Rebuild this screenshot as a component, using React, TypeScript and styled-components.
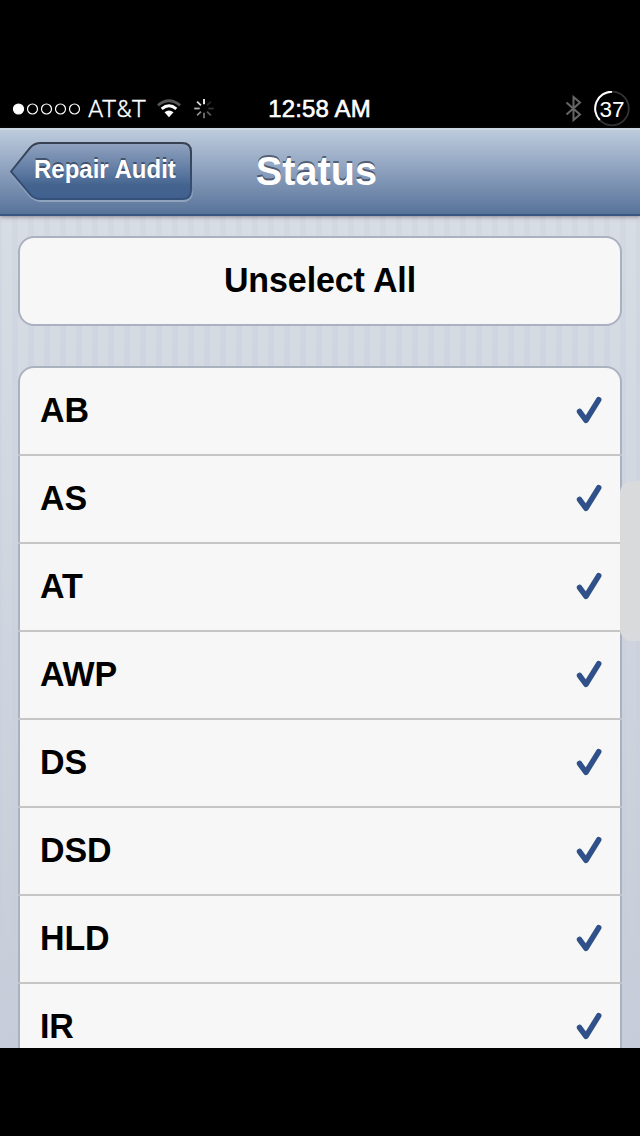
import React from "react";
import styled, { createGlobalStyle } from "styled-components";

const GlobalStyle = createGlobalStyle`
  * { box-sizing: border-box; }
  body { margin: 0; background: #000; font-family: "Liberation Sans", Arial, sans-serif; }
`;

const Phone = styled.div`
  width: 640px;
  height: 1136px;
  padding: 88px 0;
  background: #000;
  overflow: hidden;
`;

const Screen = styled.div`
  position: relative;
  height: 960px;
  display: flex;
  flex-direction: column;
  overflow: hidden;
`;

const StatusBar = styled.div`
  flex: none;
  height: 40px;
  padding: 0 10px 1px 12px;
  display: grid;
  grid-template-columns: 1fr auto 1fr;
  align-items: center;
  color: #fff;
`;

const StatusGroup = styled.div<{ $end?: boolean }>`
  display: flex;
  align-items: center;
  justify-content: ${(p) => (p.$end ? "flex-end" : "flex-start")};
`;

const Carrier = styled.span`
  margin: 0 11px 1px 7px;
  width: 57px;
  font: 300 24.5px/38px Roboto, sans-serif;
  -webkit-text-stroke: 0.3px #fff;
  white-space: nowrap;
`;

const Clock = styled.span`
  margin-right: 3px;
  font-size: 24px;
  line-height: 42px;
  letter-spacing: 0.15px;
  -webkit-text-stroke: 0.6px #fff;
  transform: scaleY(1.02);
`;

const Spinner = styled.svg`
  margin-left: 12px;
`;

const Battery = styled.svg`
  margin-left: 12px;
`;

const NavBar = styled.header`
  flex: none;
  position: relative;
  z-index: 1;
  height: 88px;
  padding: 14px 10px 0;
  display: grid;
  grid-template-columns: 184px 1fr 191px;
  align-items: start;
  border-top: 2px solid #cdd7e4;
  border-bottom: 2px solid #375780;
  background: linear-gradient(#bdcbdc, #8b9fbd 50%, #587399);
  box-shadow: 0 1px 4px rgba(60, 50, 60, 0.5);
`;

const BackButton = styled.button`
  position: relative;
  width: 184px;
  height: 60px;
  margin-top: -2px;
  padding: 0 0 4px 24px;
  border: 0;
  background: none;
  color: #fff;
  font: bold 24px/56px "Liberation Sans", Arial, sans-serif;
  text-align: left;
  white-space: nowrap;
  text-shadow: 0 -2px 0 rgba(40, 50, 70, 0.65);
`;

const BackShape = styled.svg`
  position: absolute;
  inset: 0;
`;

const BackLabel = styled.span`
  position: relative;
  display: block;
  transform: scaleY(1.045);
`;

const Title = styled.h1`
  margin: -2px 0 0;
  color: #fff;
  font-size: 39.7px;
  line-height: 56px;
  text-align: center;
  text-shadow: 0 -2px 0 rgba(40, 50, 70, 0.65);
  transform: scaleY(1.045);
`;

const Content = styled.main`
  flex: 1;
  min-height: 0;
  padding: 20px 18px 0;
  background:
    linear-gradient(90deg, rgba(190, 203, 222, 0.22) 6px, transparent 6px) 12px 0 / 16px 100%,
    linear-gradient(#d8dce4, #c8ccd8);
  overflow: hidden;
`;

const Group = styled.div`
  margin-bottom: 40px;
  border: 2px solid #aab1bf;
  border-radius: 16px;
  background: #f7f7f7;
`;

const SelectButton = styled.button`
  display: block;
  width: 100%;
  height: 86px;
  padding: 0;
  border: 0;
  background: none;
  color: #000;
  font: bold 34px/82px "Liberation Sans", Arial, sans-serif;
`;

const Row = styled.div`
  height: 88px;
  margin: 0 -2px;
  padding: 0 20px 0 22px;
  display: flex;
  align-items: center;
  justify-content: space-between;
  border-bottom: 2px solid #c5c5c5;
`;

const Label = styled.span`
  display: block;
  font-size: 34px;
  font-weight: bold;
  line-height: 82px;
  padding-bottom: 2px;
  letter-spacing: -0.1px;
  transform: scaleY(1.03);
`;

const SideHandle = styled.div`
  position: absolute;
  right: 0;
  top: 393px;
  width: 20px;
  height: 160px;
  border-radius: 12px 0 0 12px;
  background: #d9dadc;
`;

const statuses = ["AB", "AS", "AT", "AWP", "DS", "DSD", "HLD", "IR"];
const spokes = [1, 0.15, 0.2, 0.35, 0.45, 0.55, 0.7, 0.85];

const Check = () => (
  <svg width="26" height="30" viewBox="0 0 26 30" fill="none">
    <path d="M3.5 15.5L10 24.3L22.7 3.7" stroke="#2f5088" strokeWidth="5.5" strokeLinecap="round" strokeLinejoin="round" />
  </svg>
);

export default function App() {
  return (
    <Phone>
      <GlobalStyle />
      <Screen>
        <StatusBar>
          <StatusGroup>
            <svg width="69" height="14" viewBox="0 0.5 69 14" fill="none" stroke="#fff" strokeWidth="1.2">
              <circle cx="6.5" cy="7.5" r="5" fill="#fff" />
              {[20.5, 34.5, 48.5, 62.5].map((x) => <circle key={x} cx={x} cy="7.5" r="5" />)}
            </svg>
            <Carrier>AT&amp;T</Carrier>
            <svg width="26" height="20" viewBox="0 0.7 26 20" fill="none" strokeWidth="3">
              <path d="M2 7Q13-2 24 7" stroke="#555" />
              <path d="M5.7 10.5Q13 4.5 20.3 10.5" stroke="#fff" />
              <path d="M8.5 14Q13 10.5 17.5 14L13 19Z" fill="#fff" />
            </svg>
            <Spinner width="20" height="20" viewBox="-10 -9.5 20 20">
              {spokes.map((o, i) => (
                <path key={i} d="M0-4.3V-9.8" stroke="#fff" strokeWidth="1.8" opacity={o} transform={`rotate(${i * 45})`} />
              ))}
            </Spinner>
          </StatusGroup>
          <Clock>12:58 AM</Clock>
          <StatusGroup $end>
            <svg width="17" height="28" viewBox="0 0.5 17 28" fill="none" stroke="#666" strokeWidth="2">
              <path d="M1.5 8L15 20L8.5 25.5V2.5L15 8L1.5 20" />
            </svg>
            <Battery width="36" height="36" viewBox="0 0.5 36 36" fill="none">
              <circle cx="18" cy="18" r="16.8" stroke="#333" strokeWidth="1.8" />
              <path d="M18 1.2A16.8 16.8 0 0 0 5.7 29.5" stroke="#fff" strokeWidth="2" />
              <text x="18" y="26.3" textAnchor="middle" fill="#fff" fontSize="22.5" fontFamily="Liberation Sans, sans-serif">37</text>
            </Battery>
          </StatusGroup>
        </StatusBar>
        <NavBar>
          <BackButton>
            <BackShape width="184" height="60" viewBox="0 0 184 61" preserveAspectRatio="none" fill="none">
              <defs>
                <linearGradient id="back" x2="0" y2="1">
                  <stop stopColor="#91a3bf" />
                  <stop offset="0.5" stopColor="#5f7ba3" />
                  <stop offset="0.75" stopColor="#44648f" />
                  <stop offset="1" stopColor="#41608f" />
                </linearGradient>
                <linearGradient id="edge" x2="0" y2="1">
                  <stop stopColor="#37414f" />
                  <stop offset="1" stopColor="#34517c" />
                </linearGradient>
              </defs>
              <path d="M1 32L20 55Q25 60 32 60H172Q182 60 182 50" stroke="#8fa3bf" strokeWidth="2" />
              <path d="M1 30L20 6Q24 1 31 1H172Q181 1 181 10V49Q181 58 172 58H31Q24 58 20 53Z" fill="url(#back)" stroke="url(#edge)" strokeWidth="2" />
            </BackShape>
            <BackLabel>Repair Audit</BackLabel>
          </BackButton>
          <Title>Status</Title>
        </NavBar>
        <Content>
          <Group>
            <SelectButton><Label>Unselect All</Label></SelectButton>
          </Group>
          <Group>
            {statuses.map((s) => (
              <Row key={s}><Label>{s}</Label><Check /></Row>
            ))}
          </Group>
        </Content>
        <SideHandle />
      </Screen>
    </Phone>
  );
}
